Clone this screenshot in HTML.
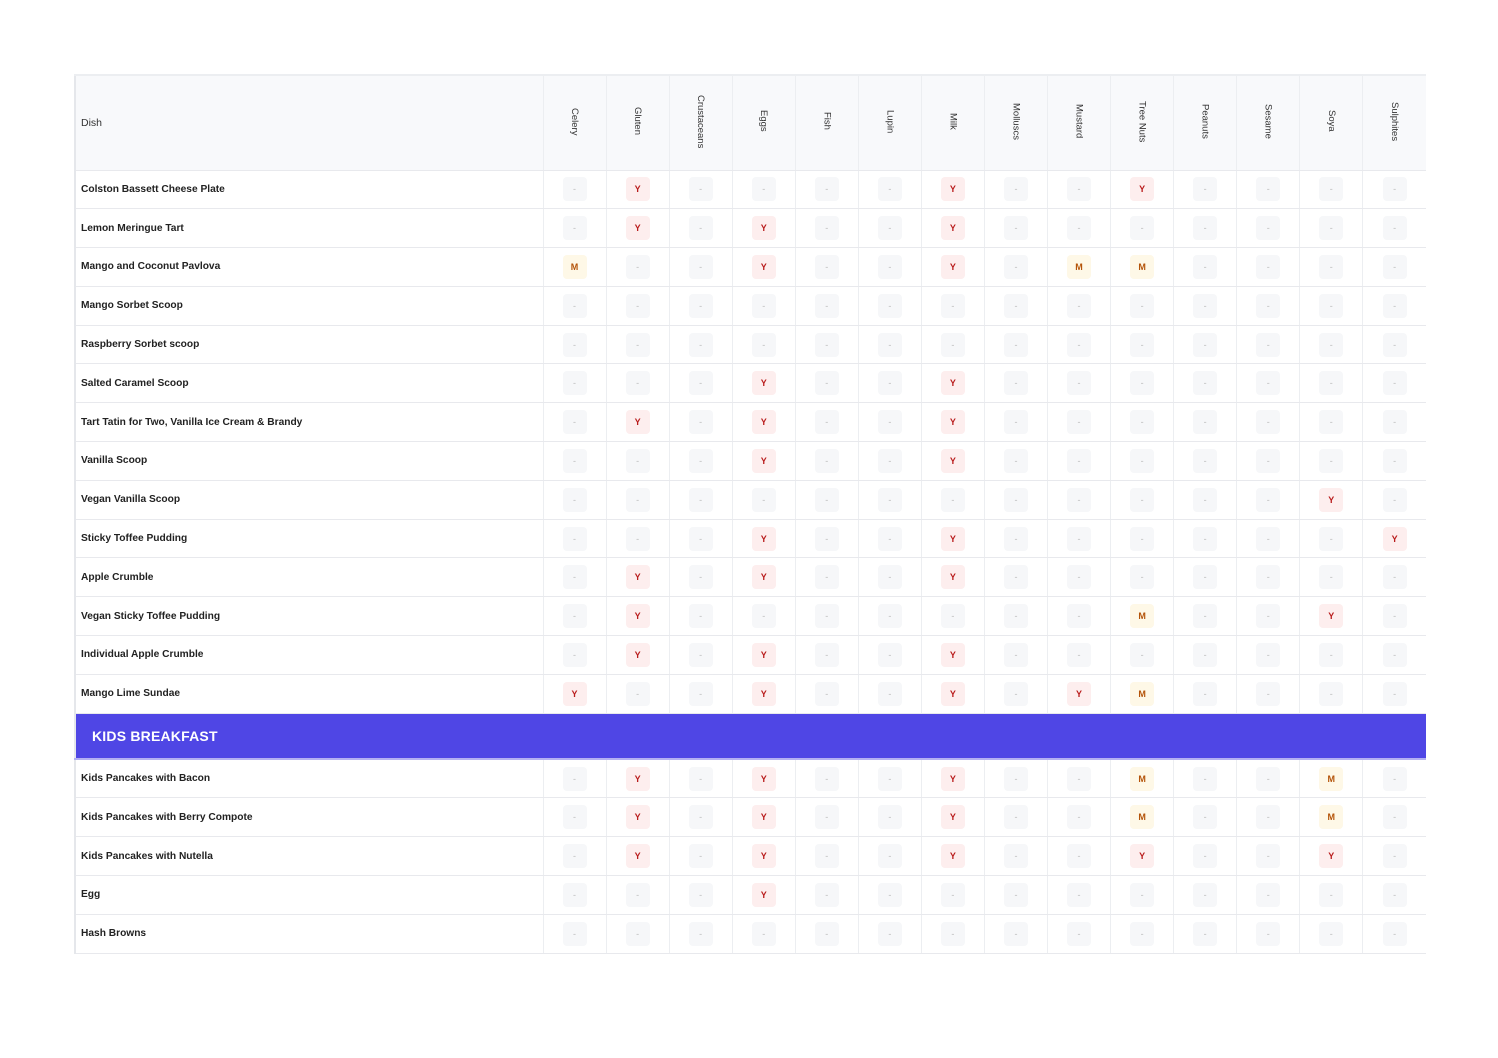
<!DOCTYPE html>
<html><head><meta charset="utf-8"><style>
*{box-sizing:border-box;margin:0;padding:0}
body{width:1498px;height:1058px;background:#fff;font-family:"Liberation Sans","DejaVu Sans",sans-serif;color:#1f2937;position:relative;overflow:hidden}
table{position:absolute;left:74px;top:74px;width:1351px;border-collapse:collapse;table-layout:fixed;border-left:2px solid #e5e7eb;border-top:2px solid #eceef1}
td,th{border-bottom:1.5px solid #e8e9ed;border-right:1.5px solid #eceef1;height:38.8px;text-align:center;vertical-align:middle;padding:0}
th{background:#f8f9fb;height:95px;font-weight:normal;font-size:9.5px;color:#333}
th.d{text-align:left;padding-left:5px;font-size:10.5px}
th span{writing-mode:vertical-rl;display:inline-block}
td.n{text-align:left;padding-left:5px;font-size:10.2px;font-weight:bold;color:#222}
td:last-child,th:last-child{border-right:none}
b{display:inline-block;width:24px;height:24px;line-height:24px;border-radius:4px;font-size:9px;font-weight:bold}
b.o{background:#f6f7f9;color:#bbb;font-weight:normal}
b.y{background:#fdeeee;color:#b91c1c}
b.m{background:#fef8e7;color:#b45309}
tr.s td{background:#4f46e5;height:46px;color:#fff;text-align:left;padding-left:16px;font-size:14px;font-weight:bold;border-bottom:2px solid #b4b0f2;letter-spacing:.2px}
</style></head><body>
<table>
<colgroup><col style="width:468px"><col span="14" style="width:63.07px"></colgroup>
<tr><th class="d">Dish</th><th><span>Celery</span></th><th><span>Gluten</span></th><th><span>Crustaceans</span></th><th><span>Eggs</span></th><th><span>Fish</span></th><th><span>Lupin</span></th><th><span>Milk</span></th><th><span>Molluscs</span></th><th><span>Mustard</span></th><th><span>Tree Nuts</span></th><th><span>Peanuts</span></th><th><span>Sesame</span></th><th><span>Soya</span></th><th><span>Sulphites</span></th></tr>
<tr><td class="n">Colston Bassett Cheese Plate</td><td><b class="o">-</b></td><td><b class="y">Y</b></td><td><b class="o">-</b></td><td><b class="o">-</b></td><td><b class="o">-</b></td><td><b class="o">-</b></td><td><b class="y">Y</b></td><td><b class="o">-</b></td><td><b class="o">-</b></td><td><b class="y">Y</b></td><td><b class="o">-</b></td><td><b class="o">-</b></td><td><b class="o">-</b></td><td><b class="o">-</b></td></tr>
<tr><td class="n">Lemon Meringue Tart</td><td><b class="o">-</b></td><td><b class="y">Y</b></td><td><b class="o">-</b></td><td><b class="y">Y</b></td><td><b class="o">-</b></td><td><b class="o">-</b></td><td><b class="y">Y</b></td><td><b class="o">-</b></td><td><b class="o">-</b></td><td><b class="o">-</b></td><td><b class="o">-</b></td><td><b class="o">-</b></td><td><b class="o">-</b></td><td><b class="o">-</b></td></tr>
<tr><td class="n">Mango and Coconut Pavlova</td><td><b class="m">M</b></td><td><b class="o">-</b></td><td><b class="o">-</b></td><td><b class="y">Y</b></td><td><b class="o">-</b></td><td><b class="o">-</b></td><td><b class="y">Y</b></td><td><b class="o">-</b></td><td><b class="m">M</b></td><td><b class="m">M</b></td><td><b class="o">-</b></td><td><b class="o">-</b></td><td><b class="o">-</b></td><td><b class="o">-</b></td></tr>
<tr><td class="n">Mango Sorbet Scoop</td><td><b class="o">-</b></td><td><b class="o">-</b></td><td><b class="o">-</b></td><td><b class="o">-</b></td><td><b class="o">-</b></td><td><b class="o">-</b></td><td><b class="o">-</b></td><td><b class="o">-</b></td><td><b class="o">-</b></td><td><b class="o">-</b></td><td><b class="o">-</b></td><td><b class="o">-</b></td><td><b class="o">-</b></td><td><b class="o">-</b></td></tr>
<tr><td class="n">Raspberry Sorbet scoop</td><td><b class="o">-</b></td><td><b class="o">-</b></td><td><b class="o">-</b></td><td><b class="o">-</b></td><td><b class="o">-</b></td><td><b class="o">-</b></td><td><b class="o">-</b></td><td><b class="o">-</b></td><td><b class="o">-</b></td><td><b class="o">-</b></td><td><b class="o">-</b></td><td><b class="o">-</b></td><td><b class="o">-</b></td><td><b class="o">-</b></td></tr>
<tr><td class="n">Salted Caramel Scoop</td><td><b class="o">-</b></td><td><b class="o">-</b></td><td><b class="o">-</b></td><td><b class="y">Y</b></td><td><b class="o">-</b></td><td><b class="o">-</b></td><td><b class="y">Y</b></td><td><b class="o">-</b></td><td><b class="o">-</b></td><td><b class="o">-</b></td><td><b class="o">-</b></td><td><b class="o">-</b></td><td><b class="o">-</b></td><td><b class="o">-</b></td></tr>
<tr><td class="n">Tart Tatin for Two, Vanilla Ice Cream &amp; Brandy</td><td><b class="o">-</b></td><td><b class="y">Y</b></td><td><b class="o">-</b></td><td><b class="y">Y</b></td><td><b class="o">-</b></td><td><b class="o">-</b></td><td><b class="y">Y</b></td><td><b class="o">-</b></td><td><b class="o">-</b></td><td><b class="o">-</b></td><td><b class="o">-</b></td><td><b class="o">-</b></td><td><b class="o">-</b></td><td><b class="o">-</b></td></tr>
<tr><td class="n">Vanilla Scoop</td><td><b class="o">-</b></td><td><b class="o">-</b></td><td><b class="o">-</b></td><td><b class="y">Y</b></td><td><b class="o">-</b></td><td><b class="o">-</b></td><td><b class="y">Y</b></td><td><b class="o">-</b></td><td><b class="o">-</b></td><td><b class="o">-</b></td><td><b class="o">-</b></td><td><b class="o">-</b></td><td><b class="o">-</b></td><td><b class="o">-</b></td></tr>
<tr><td class="n">Vegan Vanilla Scoop</td><td><b class="o">-</b></td><td><b class="o">-</b></td><td><b class="o">-</b></td><td><b class="o">-</b></td><td><b class="o">-</b></td><td><b class="o">-</b></td><td><b class="o">-</b></td><td><b class="o">-</b></td><td><b class="o">-</b></td><td><b class="o">-</b></td><td><b class="o">-</b></td><td><b class="o">-</b></td><td><b class="y">Y</b></td><td><b class="o">-</b></td></tr>
<tr><td class="n">Sticky Toffee Pudding</td><td><b class="o">-</b></td><td><b class="o">-</b></td><td><b class="o">-</b></td><td><b class="y">Y</b></td><td><b class="o">-</b></td><td><b class="o">-</b></td><td><b class="y">Y</b></td><td><b class="o">-</b></td><td><b class="o">-</b></td><td><b class="o">-</b></td><td><b class="o">-</b></td><td><b class="o">-</b></td><td><b class="o">-</b></td><td><b class="y">Y</b></td></tr>
<tr><td class="n">Apple Crumble</td><td><b class="o">-</b></td><td><b class="y">Y</b></td><td><b class="o">-</b></td><td><b class="y">Y</b></td><td><b class="o">-</b></td><td><b class="o">-</b></td><td><b class="y">Y</b></td><td><b class="o">-</b></td><td><b class="o">-</b></td><td><b class="o">-</b></td><td><b class="o">-</b></td><td><b class="o">-</b></td><td><b class="o">-</b></td><td><b class="o">-</b></td></tr>
<tr><td class="n">Vegan Sticky Toffee Pudding</td><td><b class="o">-</b></td><td><b class="y">Y</b></td><td><b class="o">-</b></td><td><b class="o">-</b></td><td><b class="o">-</b></td><td><b class="o">-</b></td><td><b class="o">-</b></td><td><b class="o">-</b></td><td><b class="o">-</b></td><td><b class="m">M</b></td><td><b class="o">-</b></td><td><b class="o">-</b></td><td><b class="y">Y</b></td><td><b class="o">-</b></td></tr>
<tr><td class="n">Individual Apple Crumble</td><td><b class="o">-</b></td><td><b class="y">Y</b></td><td><b class="o">-</b></td><td><b class="y">Y</b></td><td><b class="o">-</b></td><td><b class="o">-</b></td><td><b class="y">Y</b></td><td><b class="o">-</b></td><td><b class="o">-</b></td><td><b class="o">-</b></td><td><b class="o">-</b></td><td><b class="o">-</b></td><td><b class="o">-</b></td><td><b class="o">-</b></td></tr>
<tr><td class="n">Mango Lime Sundae</td><td><b class="y">Y</b></td><td><b class="o">-</b></td><td><b class="o">-</b></td><td><b class="y">Y</b></td><td><b class="o">-</b></td><td><b class="o">-</b></td><td><b class="y">Y</b></td><td><b class="o">-</b></td><td><b class="y">Y</b></td><td><b class="m">M</b></td><td><b class="o">-</b></td><td><b class="o">-</b></td><td><b class="o">-</b></td><td><b class="o">-</b></td></tr>
<tr class="s"><td colspan="15">KIDS BREAKFAST</td></tr>
<tr><td class="n">Kids Pancakes with Bacon</td><td><b class="o">-</b></td><td><b class="y">Y</b></td><td><b class="o">-</b></td><td><b class="y">Y</b></td><td><b class="o">-</b></td><td><b class="o">-</b></td><td><b class="y">Y</b></td><td><b class="o">-</b></td><td><b class="o">-</b></td><td><b class="m">M</b></td><td><b class="o">-</b></td><td><b class="o">-</b></td><td><b class="m">M</b></td><td><b class="o">-</b></td></tr>
<tr><td class="n">Kids Pancakes with Berry Compote</td><td><b class="o">-</b></td><td><b class="y">Y</b></td><td><b class="o">-</b></td><td><b class="y">Y</b></td><td><b class="o">-</b></td><td><b class="o">-</b></td><td><b class="y">Y</b></td><td><b class="o">-</b></td><td><b class="o">-</b></td><td><b class="m">M</b></td><td><b class="o">-</b></td><td><b class="o">-</b></td><td><b class="m">M</b></td><td><b class="o">-</b></td></tr>
<tr><td class="n">Kids Pancakes with Nutella</td><td><b class="o">-</b></td><td><b class="y">Y</b></td><td><b class="o">-</b></td><td><b class="y">Y</b></td><td><b class="o">-</b></td><td><b class="o">-</b></td><td><b class="y">Y</b></td><td><b class="o">-</b></td><td><b class="o">-</b></td><td><b class="y">Y</b></td><td><b class="o">-</b></td><td><b class="o">-</b></td><td><b class="y">Y</b></td><td><b class="o">-</b></td></tr>
<tr><td class="n">Egg</td><td><b class="o">-</b></td><td><b class="o">-</b></td><td><b class="o">-</b></td><td><b class="y">Y</b></td><td><b class="o">-</b></td><td><b class="o">-</b></td><td><b class="o">-</b></td><td><b class="o">-</b></td><td><b class="o">-</b></td><td><b class="o">-</b></td><td><b class="o">-</b></td><td><b class="o">-</b></td><td><b class="o">-</b></td><td><b class="o">-</b></td></tr>
<tr><td class="n">Hash Browns</td><td><b class="o">-</b></td><td><b class="o">-</b></td><td><b class="o">-</b></td><td><b class="o">-</b></td><td><b class="o">-</b></td><td><b class="o">-</b></td><td><b class="o">-</b></td><td><b class="o">-</b></td><td><b class="o">-</b></td><td><b class="o">-</b></td><td><b class="o">-</b></td><td><b class="o">-</b></td><td><b class="o">-</b></td><td><b class="o">-</b></td></tr>
</table>
</body></html>
